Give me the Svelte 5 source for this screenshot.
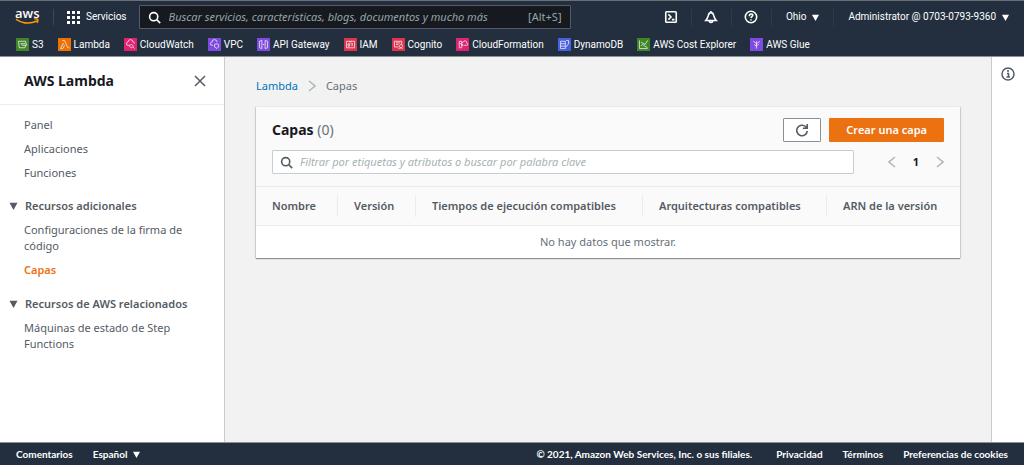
<script lang="ts">
	const services = [
		{ name: 'S3', color: 'green', icon: 'M3 4l1 8h7l1-3M3 4h9v2M6 7h7v2H8z' },
		{ name: 'Lambda', color: 'orange', icon: 'M5 3h3l4 9h2M7 6l-4 7h3l2-4' },
		{ name: 'CloudWatch', color: 'pink', icon: 'M7 9H5a2 2 0 0 1 0-4 3 3 0 0 1 6 0 2 2 0 0 1 2 2M9 8a2 2 0 1 0 .1 0M11 11l2 2' },
		{ name: 'VPC', color: 'purple', icon: 'M6 9H5a2 2 0 0 1 0-4 3 3 0 0 1 6 0M8 8l3-1 2 1v3l-2 2-3-2z' },
		{ name: 'API Gateway', color: 'purple', icon: 'M3 4v8M6 3v10M10 3v10M13 4v8M3 4l3-1M3 12l3 1M10 3l3 1M10 13l3-1M7 8h2' },
		{ name: 'IAM', color: 'red', icon: 'M3 4h10v8H3zM5 7h2v3H5zM9 7h2M10 7v3M7 4v1h2V4' },
		{ name: 'Cognito', color: 'red', icon: 'M8 11H3V4h9v4M5 6h5M5 8h3M11 8a2 2 0 1 0 .1 0M8 13l3-1 2 1' },
		{ name: 'CloudFormation', color: 'pink', icon: 'M7 4H4v8h3V4M4 7h3M7 9h2a2 2 0 0 1 0-4 2 2 0 0 1 4 1 1 1 0 0 1 0 3h-3' },
		{ name: 'DynamoDB', color: 'blue', icon: 'M3 4h6v9H3zM3 7h6M3 10h6M10 3h3v4l-3 4M13 6h1' },
		{ name: 'AWS Cost Explorer', color: 'green', icon: 'M3 3v10h10M5 10l3-3 2 1 3-5M8 9l5 3M5 5l3 2' },
		{ name: 'AWS Glue', color: 'purple', icon: 'M4 4l4 3 4-3M8 4v9M5 8l3 2 3-3' },
	];

	const links = ['Panel', 'Aplicaciones', 'Funciones'];
	const groups = [
		{ title: 'Recursos adicionales', links: ['Configuraciones de la firma de código', 'Capas'] },
		{ title: 'Recursos de AWS relacionados', links: ['Máquinas de estado de Step Functions'] },
	];
	const columns = [
		{ label: 'Nombre', size: 'name' },
		{ label: 'Versión', size: 'version' },
		{ label: 'Tiempos de ejecución compatibles', size: 'runtimes' },
		{ label: 'Arquitecturas compatibles', size: 'archs' },
		{ label: 'ARN de la versión', size: 'arn' },
	];

	let current = $state('Capas');
	let search = $state('');
	let filter = $state('');
</script>

{#snippet magnifier()}
	<svg class="magnifier" viewBox="0 0 16 16" aria-hidden="true">
		<circle cx="7" cy="7" r="5" />
		<path d="M11 11l4 4" />
	</svg>
{/snippet}

{#snippet caret()}
	<svg class="caret" viewBox="0 0 10 10" aria-hidden="true"><path d="M0 1h10L5 10z" /></svg>
{/snippet}

<div class="page">
	<header>
		<div class="topbar">
			<a class="logo" href="#home" aria-label="aws">
				<span>aws</span>
				<svg viewBox="0 0 26 7" aria-hidden="true">
					<path d="M1 1c7 5 15 5 22 2" />
					<path d="M20 1c3-1 5 0 3 4" />
				</svg>
			</a>
			<button class="services">
				<svg viewBox="0 0 13 13" aria-hidden="true">
					{#each [0, 5, 10] as y}
						{#each [0, 5, 10] as x}
							<rect {x} {y} width="3" height="3" />
						{/each}
					{/each}
				</svg>
				Servicios
			</button>
			<label class="search">
				{@render magnifier()}
				<input type="text" aria-label="Buscar" placeholder="Buscar servicios, características, blogs, documentos y mucho más" bind:value={search} />
				<span>[Alt+S]</span>
			</label>
			<div class="tools">
				<button class="tool" aria-label="CloudShell">
					<svg viewBox="0 0 16 16"><rect x="2" y="2" width="12" height="12" rx="1" /><path d="M5 5l3 3-3 3M9 11h3" /></svg>
				</button>
				<button class="tool" aria-label="Notificaciones">
					<svg viewBox="0 0 16 16"><path d="M8 1v2M2 12c2-2 2-3 3-6 1-4 5-4 6 0 1 3 1 4 3 6zM6 12c0 3 4 3 4 0" /></svg>
				</button>
				<button class="tool" aria-label="Ayuda">
					<svg viewBox="0 0 16 16"><circle cx="8" cy="8" r="6.5" /><path d="M6 7c0-3 4-3 4-1 0 1.500-2 1.500-2 3M8 10.500v1.500" /></svg>
				</button>
				<button class="region">Ohio {@render caret()}</button>
				<button class="account">Administrator @ 0703-0793-9360 {@render caret()}</button>
			</div>
		</div>
		<nav class="favorites" aria-label="Favoritos">
			{#each services as service}
				<a href="#{service.name}">
					<svg class={service.color} viewBox="0 0 16 16" aria-hidden="true"><path d={service.icon} /></svg>
					{service.name}
				</a>
			{/each}
		</nav>
	</header>

	<div class="body">
		<aside class="sidebar">
			<div class="sidebar-head">
				<h2>AWS Lambda</h2>
				<button aria-label="Cerrar"><svg viewBox="0 0 12 12"><path d="M1 1l10 10M11 1L1 11" /></svg></button>
			</div>
			<nav aria-label="AWS Lambda">
				<ul>
					{#each links as link}
						<li><a href="#{link}">{link}</a></li>
					{/each}
				</ul>
				{#each groups as group}
					<details open>
						<summary>{@render caret()}{group.title}</summary>
						<ul>
							{#each group.links as link}
								<li><a href="#{link}" class:active={link === current} onclick={() => (current = link)}>{link}</a></li>
							{/each}
						</ul>
					</details>
				{/each}
			</nav>
		</aside>

		<main>
			<nav class="breadcrumb" aria-label="Ruta">
				<a href="#lambda">Lambda</a>
				<svg class="chevron" viewBox="0 0 8 12" aria-hidden="true"><path d="M1 1l6 5-6 5" /></svg>
				<span>Capas</span>
			</nav>

			<section class="card">
				<div class="card-head">
					<div class="title-row">
						<h1>Capas <span>(0)</span></h1>
						<button class="refresh" aria-label="Actualizar">
							<svg viewBox="0 0 16 16"><path d="M14 9a6 6 0 1 1-2-5l2 2M14 1v5H9" /></svg>
						</button>
						<button class="create">Crear una capa</button>
					</div>
					<div class="filter-row">
						<label class="filter">
							{@render magnifier()}
							<input type="text" aria-label="Filtrar" placeholder="Filtrar por etiquetas y atributos o buscar por palabra clave" bind:value={filter} />
						</label>
						<div class="pager">
							<button aria-label="Anterior"><svg class="chevron" viewBox="0 0 8 12"><path d="M7 1L1 6l6 5" /></svg></button>
							<button class="page-number">1</button>
							<button aria-label="Siguiente"><svg class="chevron" viewBox="0 0 8 12"><path d="M1 1l6 5-6 5" /></svg></button>
						</div>
					</div>
				</div>
				<table>
					<thead>
						<tr>
							{#each columns as column}
								<th class={column.size}><div>{column.label}</div></th>
							{/each}
						</tr>
					</thead>
					<tbody>
						<tr><td colspan={columns.length}>No hay datos que mostrar.</td></tr>
					</tbody>
				</table>
			</section>
		</main>

		<aside class="rail">
			<button aria-label="Información">
				<svg viewBox="0 0 14 14"><circle cx="7" cy="7" r="6" /><path d="M7 3v2M6 6.500h1.500V10M5.500 10h3.500" /></svg>
			</button>
		</aside>
	</div>

	<footer>
		<a href="#comentarios">Comentarios</a>
		<button>Español {@render caret()}</button>
		<span class="copyright">© 2021, Amazon Web Services, Inc. o sus filiales.</span>
		<a href="#privacidad">Privacidad</a>
		<a href="#terminos">Términos</a>
		<a href="#cookies">Preferencias de cookies</a>
	</footer>
</div>

<style>
	.page {
		display: flex;
		flex-direction: column;
		min-height: 100vh;
		font: 11px/16px "Noto Sans", "Open Sans", sans-serif;
		color: #545b64;
		background: #f2f2f2;
	}

	.page * {
		box-sizing: border-box;
	}

	button {
		display: flex;
		align-items: center;
		padding: 0;
		border: 0;
		background: none;
		font: inherit;
		color: inherit;
		white-space: nowrap;
		cursor: pointer;
	}

	a {
		color: inherit;
		text-decoration: none;
	}

	ul {
		list-style: none;
		margin: 0;
		padding: 0;
	}

	svg {
		display: block;
		flex: none;
		fill: none;
		stroke: currentColor;
	}

	input {
		flex: 1;
		min-width: 0;
		padding: 0;
		border: 0;
		outline: 0;
		background: none;
		font: inherit;
		color: inherit;
	}

	input::placeholder {
		font-style: italic;
		color: #95a5a6;
		opacity: 1;
	}

	.magnifier {
		width: 13px;
		height: 13px;
		stroke-width: 2;
	}

	.caret {
		width: 7px;
		height: 7px;
		fill: currentColor;
		stroke: none;
	}

	.chevron {
		width: 8px;
		height: 12px;
		color: #aab7b8;
		stroke-width: 1.5;
	}

	/* header */
	header {
		border-top: 1px solid #687078;
		border-bottom: 1px solid #879196;
		background: #232f3e;
		color: #fff;
	}

	.topbar {
		display: flex;
		align-items: center;
		height: 32px;
		padding: 0 15px;
		font: 10px/16px Roboto, "Noto Sans", sans-serif;
	}

	.logo {
		width: 39px;
		border-right: 1px solid #3b4653;
	}

	.logo span {
		display: block;
		font: 600 13px/9px "Open Sans", sans-serif;
	}

	.logo svg {
		width: 25px;
		height: 7px;
		color: #f90;
		stroke-width: 1.5;
	}

	.services {
		gap: 6px;
		margin: 0 12px 0 13px;
	}

	.services svg {
		width: 13px;
		height: 13px;
		fill: #fff;
		stroke: none;
	}

	.search {
		display: flex;
		flex: 0 1 432px;
		align-items: center;
		gap: 8px;
		height: 24px;
		padding: 0 8px;
		border: 1px solid #545b64;
		border-radius: 1px;
		background: #16191f;
		font: 11px/16px "Noto Sans", "Open Sans", sans-serif;
	}

	.search span {
		color: #95a5a6;
	}

	.tools {
		display: flex;
		align-items: center;
		margin-left: auto;
	}

	.tools button {
		height: 17px;
		gap: 6px;
	}

	.tools button + button {
		border-left: 1px solid #303b49;
	}

	.tool {
		width: 40px;
		justify-content: center;
	}

	.tool svg {
		width: 14px;
		height: 14px;
		stroke-width: 1.8;
	}

	.tools .region {
		padding: 0 14px;
	}

	.tools .account {
		padding-left: 14px;
	}

	.favorites {
		display: flex;
		gap: 14px;
		align-items: center;
		height: 23px;
		padding: 0 16px;
		font: 10px/16px Roboto, "Noto Sans", sans-serif;
		white-space: nowrap;
	}

	.favorites a {
		display: flex;
		gap: 3px;
		align-items: center;
	}

	.favorites svg {
		width: 13px;
		height: 13px;
		color: #f4e6f4;
	}

	.green { background: #3f8624; }
	.orange { background: #ed7100; }
	.pink { background: #e0226f; }
	.purple { background: #7d4be0; }
	.red { background: #dd344c; }
	.blue { background: #4360e0; }

	/* columns below the header */
	.body {
		display: flex;
		flex: 1;
	}

	.sidebar {
		flex: 0 0 225px;
		border-right: 1px solid #c8cccc;
		background: #fff;
	}

	.sidebar-head {
		display: flex;
		align-items: center;
		justify-content: space-between;
		height: 48px;
		padding: 0 18px 0 24px;
		border-bottom: 1px solid #eaeded;
	}

	.sidebar-head svg {
		width: 12px;
		height: 12px;
		stroke-width: 1.5;
	}

	h1,
	h2 {
		margin: 0;
		font-size: 14px;
		line-height: 20px;
		color: #16191f;
	}

	.sidebar nav {
		padding: 12px 24px;
	}

	.sidebar li {
		margin-bottom: 8px;
	}

	.sidebar .active {
		font-weight: 600;
		color: #ec7211;
	}

	details {
		padding-top: 9px;
	}

	details + details {
		padding-top: 10px;
	}

	summary {
		display: flex;
		align-items: center;
		gap: 7px;
		margin: 0 0 8px -15px;
		font-weight: 600;
		white-space: nowrap;
		cursor: pointer;
	}

	summary .caret {
		width: 9px;
		height: 8px;
	}

	main {
		flex: 1;
		min-width: 0;
		padding: 21px 31px;
	}

	.breadcrumb {
		display: flex;
		align-items: center;
		gap: 10px;
		margin-bottom: 13px;
		color: #687078;
	}

	.breadcrumb a {
		color: #0073bb;
	}

	.card {
		background: #fff;
		box-shadow: 0 1px 1px #879196, 1px 0 1px #d5dbdb, -1px 0 1px #d5dbdb;
	}

	.card-head {
		padding: 11px 16px 12px;
		border-bottom: 1px solid #eaeded;
		background: #fafafa;
	}

	.title-row {
		display: flex;
		align-items: center;
		gap: 8px;
		margin-bottom: 8px;
	}

	h1 {
		flex: 1;
	}

	h1 span {
		font-weight: 400;
		color: #687078;
	}

	.refresh,
	.create {
		height: 24px;
		justify-content: center;
		border-radius: 1px;
	}

	.refresh {
		width: 38px;
		border: 1px solid #879196;
		background: #fff;
	}

	.refresh svg {
		width: 14px;
		height: 14px;
		stroke-width: 1.8;
	}

	.create {
		padding: 0 17px;
		background: #ec7211;
		font-weight: 600;
		color: #fff;
	}

	.filter-row {
		display: flex;
		align-items: center;
		justify-content: space-between;
		gap: 34px;
	}

	.filter {
		display: flex;
		flex: 1;
		align-items: center;
		gap: 7px;
		height: 24px;
		padding: 0 7px;
		border: 1px solid #c5cfcf;
		border-radius: 1px;
		background: #fff;
	}

	.filter input::placeholder {
		color: #a5b2b3;
	}

	.pager {
		display: flex;
		align-items: center;
		gap: 17px;
	}

	.pager .page-number {
		font-weight: 700;
		color: #16191f;
	}

	table {
		width: 100%;
		table-layout: fixed;
		border-collapse: collapse;
	}

	th {
		padding: 8px 0;
		border-bottom: 1px solid #eaeded;
		background: #fafafa;
		font-weight: 600;
		text-align: left;
		white-space: nowrap;
	}

	th div {
		padding: 3px 16px;
		border-right: 1px solid #eaeded;
	}

	th:last-child div {
		border-right: 0;
	}

	.name { width: 82px; }
	.version { width: 78px; }
	.runtimes { width: 227px; }
	.archs { width: 184px; }

	td {
		padding: 8px 16px;
		text-align: center;
		color: #687078;
	}

	.rail {
		display: flex;
		flex: 0 0 33px;
		align-items: flex-start;
		justify-content: center;
		padding-top: 10px;
		border-left: 1px solid #c8cccc;
		background: #fff;
	}

	.rail svg {
		width: 14px;
		height: 14px;
		stroke-width: 1.5;
	}

	footer {
		display: flex;
		align-items: center;
		gap: 20px;
		height: 23px;
		padding: 0 16px;
		border-top: 1px solid #879196;
		background: #232f3e;
		color: #fff;
		font: 700 10px/16px Lato, "Noto Sans", sans-serif;
		white-space: nowrap;
	}

	footer button {
		gap: 6px;
	}

	.copyright {
		margin: 0 4px 0 auto;
	}
</style>
